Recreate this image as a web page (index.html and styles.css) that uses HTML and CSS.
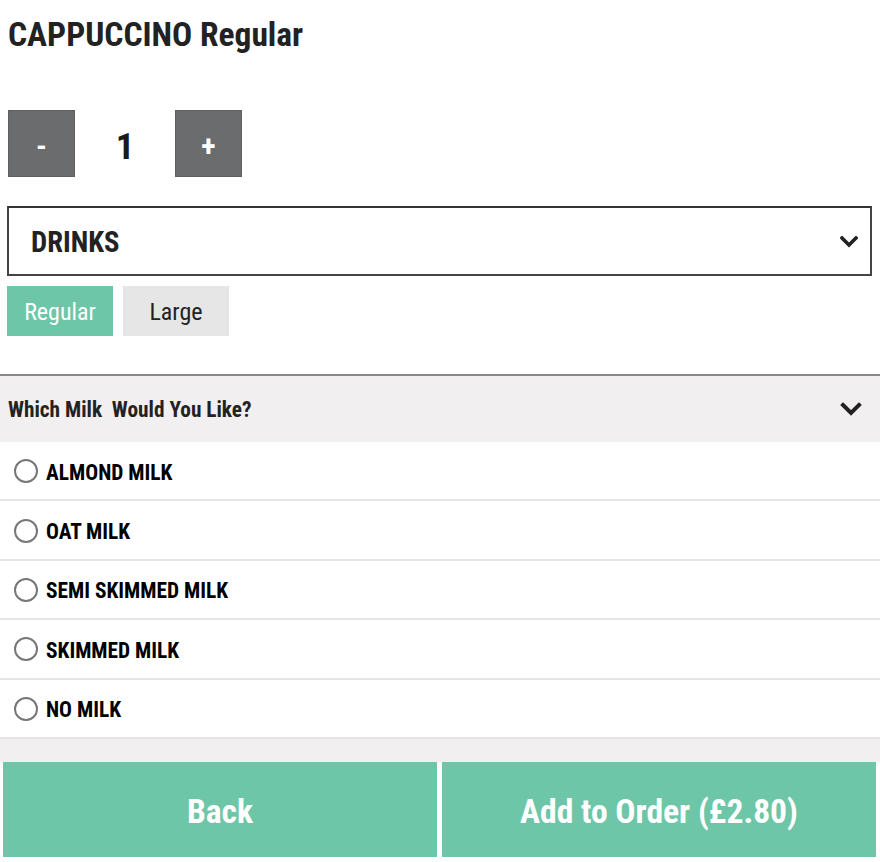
FILE: index.html
```html
<!DOCTYPE html>
<html>
<head>
<meta charset="utf-8">
<link rel="stylesheet" href="styles.css">
</head>
<body>
<div class="page">
  <h1 class="title">CAPPUCCINO Regular</h1>
  <div class="qty">
    <button class="qbtn">-</button>
    <span class="qnum">1</span>
    <button class="qbtn">+</button>
  </div>
  <div class="select">
    <span class="select-text">DRINKS</span>
    <svg class="chev" width="18" height="12" viewBox="0 0 18 12"><path d="M2 2 L9 9 L16 2" fill="none" stroke="#222" stroke-width="3.6" stroke-linecap="square"/></svg>
  </div>
  <div class="sizes">
    <button class="size active">Regular</button>
    <button class="size">Large</button>
  </div>
  <div class="group">
    <div class="group-head">
      <span>Which Milk&nbsp; Would You Like?</span>
      <svg class="chev2" width="22" height="14" viewBox="0 0 22 14"><path d="M3 3 L11 11 L19 3" fill="none" stroke="#222" stroke-width="4" stroke-linecap="square"/></svg>
    </div>
    <div class="opt"><span class="radio"></span><span>ALMOND MILK</span></div>
    <div class="opt"><span class="radio"></span><span>OAT MILK</span></div>
    <div class="opt"><span class="radio"></span><span>SEMI SKIMMED MILK</span></div>
    <div class="opt"><span class="radio"></span><span>SKIMMED MILK</span></div>
    <div class="opt"><span class="radio"></span><span>NO MILK</span></div>
  </div>
  <div class="spacer"></div>
  <div class="actions">
    <button class="act">Back</button>
    <button class="act">Add to Order (£2.80)</button>
  </div>
</div>
</body>
</html>
```
FILE: styles.css
```css
* { box-sizing: border-box; }
body {
  margin: 0;
  font-family: "Roboto Condensed", Roboto, sans-serif;
  font-stretch: condensed;
  color: #222;
  background: #fff;
}
.page { width: 880px; }
.title {
  margin: 0;
  padding: 15px 8px 0;
  font-size: 33.5px;
  font-weight: 700;
  line-height: 40px;
  color: #222;
}
.qty {
  display: flex;
  align-items: center;
  margin-top: 55px;
  padding-left: 8px;
}
.qbtn {
  width: 67px;
  height: 67px;
  border: 1px solid #5e5f61;
  background: #6b6c6e;
  color: #fff;
  font-family: inherit;
  font-stretch: condensed;
  font-size: 30px;
  font-weight: 700;
  padding: 4px 0 0;
}
.qnum {
  width: 100px;
  text-align: center;
  font-size: 37px;
  font-weight: 700;
  color: #1a1a1a;
  padding-top: 5px;
}
.select {
  display: flex;
  align-items: center;
  justify-content: space-between;
  margin: 29px 8px 0 7px;
  height: 70px;
  border: 2px solid #444;
  border-top-color: #333;
  padding: 0 12px 0 22px;
}
.select-text {
  font-size: 28.6px;
  font-weight: 700;
  color: #222;
  padding-top: 2px;
}
.chev { margin-top: 2px; }
.sizes {
  display: flex;
  gap: 10px;
  margin: 10px 0 0 7px;
}
.size {
  width: 106px;
  height: 50px;
  border: 0;
  background: #e6e6e6;
  color: #222;
  font-family: inherit;
  font-stretch: condensed;
  font-size: 24px;
  padding: 2px 0 0;
}
.size.active { background: #6dc6a7; color: #fff; }
.group {
  margin-top: 38px;
  border-top: 2px solid #888;
}
.group-head {
  display: flex;
  align-items: center;
  justify-content: space-between;
  height: 66px;
  background: #f1eff0;
  padding: 0 18px 0 8px;
  font-size: 21.3px;
  font-weight: 700;
  color: #222;
}
.opt {
  display: flex;
  align-items: center;
  gap: 8px;
  height: 59.4px;
  border-bottom: 2px solid #e6e6e6;
  padding-left: 14px;
  padding-top: 3px;
  font-size: 21.4px;
  font-weight: 700;
  color: #000;
}
.radio {
  width: 24px;
  height: 24px;
  border: 2px solid #777;
  border-radius: 50%;
  background: #fff;
  margin-top: -2px;
}
.spacer { height: 23px; background: #f1eff0; }
.actions {
  display: flex;
  gap: 5px;
  padding: 0 4px 0 3px;
}
.act {
  flex: 1;
  height: 95px;
  border: 0;
  background: #6dc6a7;
  color: #fff;
  font-family: inherit;
  font-stretch: condensed;
  font-size: 33.6px;
  font-weight: 700;
  padding: 4px 0 0;
}
```
